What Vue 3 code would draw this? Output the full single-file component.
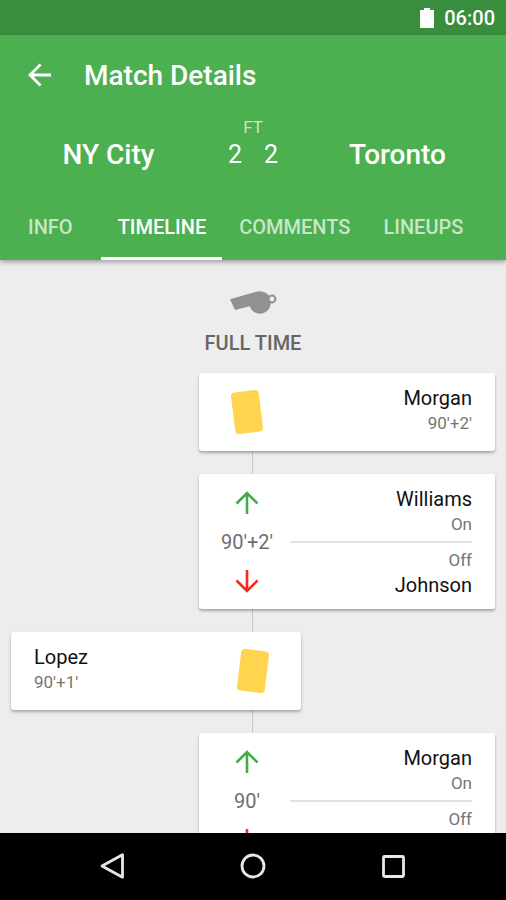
<script setup>
import { ref } from 'vue'

const tabs = ['Info', 'Timeline', 'Comments', 'Lineups']
const active = ref('Timeline')

const events = [
  { id: 1, type: 'booking', side: 'away', player: 'Morgan', minute: "90'+2'" },
  { id: 2, type: 'sub', side: 'away', on: 'Williams', off: 'Johnson', minute: "90'+2'" },
  { id: 3, type: 'booking', side: 'home', player: 'Lopez', minute: "90'+1'" },
  { id: 4, type: 'sub', side: 'away', on: 'Morgan', off: '', minute: "90'" },
]
</script>

<template>
  <div class="screen">
    <div class="status">
      <svg class="battery" viewBox="0 0 14 20" aria-hidden="true">
        <path d="M4 0h6v2h4v18H0V2h4z" fill="#fff" />
      </svg>
      <span>06:00</span>
    </div>

    <header class="header">
      <div class="appbar">
        <button class="back" type="button" aria-label="Back">
          <svg viewBox="0 0 24 24" aria-hidden="true">
            <path d="M23 12H2.500M12.500 1.500L2 12l10.500 10.500" fill="none" stroke="#fff" stroke-width="2.800" />
          </svg>
        </button>
        <h1>Match Details</h1>
      </div>

      <div class="scoreboard">
        <div class="team">NY City</div>
        <div class="result">
          <div class="period">FT</div>
          <div class="score"><span>2</span><span>2</span></div>
        </div>
        <div class="team">Toronto</div>
      </div>

      <nav class="tabs">
        <button
          v-for="tab in tabs"
          :key="tab"
          type="button"
          class="tab"
          :class="{ active: tab === active }"
          @click="active = tab"
        >{{ tab }}</button>
      </nav>
    </header>

    <main class="timeline">
      <div class="phase">
        <svg class="whistle" viewBox="0 0 48 26" aria-hidden="true">
          <path d="M1 9.200L27 1.800C29 1.200 32 1 34.500 2c3 1 5 2.500 6.500 5v5L30 20l-9.500-3.800L6 20z" fill="#919191" />
          <circle cx="31" cy="13" r="10.700" fill="#919191" />
          <circle cx="43" cy="9" r="3.400" fill="#ededed" stroke="#919191" stroke-width="2" />
        </svg>
        <h2>Full time</h2>
      </div>

      <ol class="events">
        <li v-for="e in events" :key="e.id" class="card" :class="[e.type, e.side]">
          <template v-if="e.type === 'booking'">
            <div class="marker">
              <span class="yellow"></span>
            </div>
            <div class="details">
              <div class="name">{{ e.player }}</div>
              <div class="note">{{ e.minute }}</div>
            </div>
          </template>
          <template v-else>
            <div class="marker">
              <svg class="arrow" viewBox="0 0 24 24" aria-hidden="true">
                <path d="M12 23V2.500M1.500 12.500L12 2l10.500 10.500" fill="none" stroke="#43ab47" stroke-width="2.600" />
              </svg>
              <div class="minute">{{ e.minute }}</div>
              <svg class="arrow" viewBox="0 0 24 24" aria-hidden="true">
                <path d="M12 1v20.500M1.500 11.500L12 22l10.500-10.500" fill="none" stroke="#f52a1b" stroke-width="2.600" />
              </svg>
            </div>
            <div class="details">
              <div class="name">{{ e.on }}</div>
              <div class="note">On</div>
              <hr />
              <div class="note">Off</div>
              <div class="name">{{ e.off }}</div>
            </div>
          </template>
        </li>
      </ol>
    </main>

    <div class="navbar">
      <button type="button" aria-label="Back">
        <svg viewBox="0 0 28 28" aria-hidden="true">
          <path d="M23.500 2.800v22.400L3 14z" fill="none" stroke="#e8e8e8" stroke-width="2.800" stroke-linejoin="round" />
        </svg>
      </button>
      <button type="button" aria-label="Home">
        <svg viewBox="0 0 28 28" aria-hidden="true">
          <circle cx="14" cy="14" r="11" fill="none" stroke="#e8e8e8" stroke-width="2.800" />
        </svg>
      </button>
      <button type="button" aria-label="Recent apps">
        <svg viewBox="0 0 28 28" aria-hidden="true">
          <rect x="4.500" y="4.500" width="20" height="20" rx="1" fill="none" stroke="#e8e8e8" stroke-width="2.800" />
        </svg>
      </button>
    </div>
  </div>
</template>

<style>
body {
  margin: 0;
  background: #ededed;
}
</style>

<style scoped>
.screen {
  display: flex;
  flex-direction: column;
  height: 100vh;
  overflow: hidden;
  background: #ededed;
  font-family: Roboto, 'Liberation Sans', sans-serif;
}
button {
  padding: 0;
  border: 0;
  background: none;
  font: inherit;
  color: inherit;
  cursor: pointer;
}
svg {
  display: block;
}
.status {
  display: flex;
  flex: none;
  align-items: center;
  justify-content: flex-end;
  gap: 10px;
  height: 35px;
  padding: 0 11px;
  background: #388e3c;
  color: #fff;
  font-size: 20px;
  font-weight: 500;
}
.battery {
  width: 14px;
  height: 20px;
}
.header {
  position: relative;
  flex: none;
  background: #4caf50;
  color: #fff;
  box-shadow: 0 2px 5px rgba(0, 0, 0, 0.35);
}
.appbar {
  display: flex;
  align-items: center;
  gap: 32px;
  height: 80px;
  padding: 0 28px;
}
.back svg {
  width: 24px;
  height: 24px;
}
h1 {
  margin: 0;
  font-size: 28px;
  font-weight: 500;
}
.scoreboard {
  display: grid;
  grid-template-columns: 1fr 72px 1fr;
  align-items: end;
  height: 56px;
}
.team {
  font-size: 28px;
  font-weight: 500;
  line-height: 32px;
  text-align: center;
}
.result {
  text-align: center;
}
.period {
  font-size: 17px;
  line-height: 24px;
  color: rgba(255, 255, 255, 0.7);
}
.score {
  display: flex;
  justify-content: center;
  gap: 22px;
  font-size: 25px;
  line-height: 32px;
}
.tabs {
  display: flex;
  margin-top: 24px;
}
.tab {
  height: 65px;
  padding: 2px 16px 0 17px;
  border-bottom: 3px solid transparent;
  font-size: 20px;
  font-weight: 500;
  text-transform: uppercase;
  color: rgba(255, 255, 255, 0.7);
}
.tab:first-child {
  padding-left: 28px;
  padding-right: 28px;
}
.tab.active {
  border-bottom-color: #fff;
  color: #fff;
}
.timeline {
  flex: 1;
  min-height: 0;
  overflow: hidden;
  padding: 30px 11px 0;
}
.phase {
  display: flex;
  flex-direction: column;
  align-items: center;
  gap: 15px;
}
.whistle {
  width: 48px;
  height: 26px;
}
h2 {
  margin: 0;
  font-size: 20px;
  font-weight: 500;
  line-height: 24px;
  text-transform: uppercase;
  color: #666;
}
.events {
  position: relative;
  display: flex;
  flex-direction: column;
  gap: 23px;
  margin: 18px 0 0;
  padding: 0;
  list-style: none;
}
.events::before {
  content: '';
  position: absolute;
  top: 0;
  bottom: 0;
  left: 50%;
  margin-left: -1px;
  width: 1px;
  background: #c8c8c8;
}
.card {
  position: relative;
  display: flex;
  align-items: center;
  box-sizing: border-box;
  padding: 0 23px 0 13px;
  border-radius: 3px;
  background: #fff;
  box-shadow: 0 2px 3px rgba(0, 0, 0, 0.3);
}
.away {
  margin-left: 188px;
  text-align: right;
}
.home {
  flex-direction: row-reverse;
  margin-right: 194px;
  padding: 0 13px 0 23px;
}
.booking {
  height: 78px;
}
.sub {
  height: 135px;
}
.marker {
  display: flex;
  flex: none;
  flex-direction: column;
  align-items: center;
  gap: 16px;
  width: 70px;
}
.yellow {
  width: 28px;
  height: 42px;
  border-radius: 4px;
  background: #ffd54f;
  transform: rotate(-7deg);
}
.home .yellow {
  transform: rotate(7deg);
}
.arrow {
  width: 24px;
  height: 24px;
}
.minute {
  font-size: 20px;
  line-height: 22px;
  color: #6e6e6e;
}
.details {
  flex: 1;
}
.booking .details {
  padding-bottom: 4px;
}
.sub .details {
  padding-left: 8px;
}
.name {
  min-height: 26px;
  font-size: 20px;
  line-height: 26px;
  color: #111;
}
.note {
  font-size: 17px;
  line-height: 24px;
  color: #757575;
}
hr {
  height: 2px;
  margin: 5px 0;
  border: 0;
  background: #e2e2e2;
}
.navbar {
  position: relative;
  display: flex;
  flex: none;
  align-items: center;
  justify-content: center;
  gap: 112px;
  box-sizing: border-box;
  height: 67px;
  padding-bottom: 1px;
  background: #000;
}
.navbar svg {
  width: 28px;
  height: 28px;
}
</style>
